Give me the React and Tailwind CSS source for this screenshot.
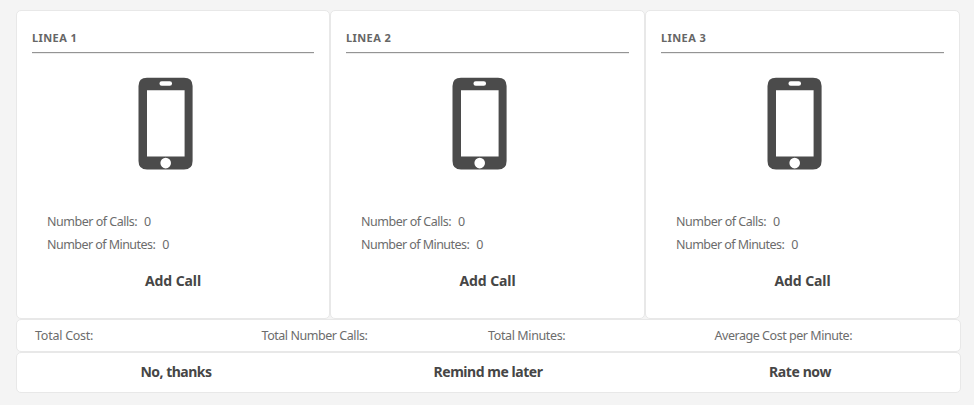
const lines = ['LINEA 1', 'LINEA 2', 'LINEA 3'];

function Phone() {
  return (
    <svg className="mt-[23px] mr-[16px] h-[93px] w-[55px] shrink-0 self-center" viewBox="0 0 55 93">
      <path
        fill="#4b4b4b"
        fillRule="evenodd"
        d="M9 .7H46Q54.6 .7 54.6 9V84Q54.6 92.5 46 92.5H9Q.5 92.5 .5 84V9Q.5 .7 9 .7ZM9 13.2V79.6H46.6V13.2ZM23.7 4.3A2.2 2.2 0 0 0 23.7 8.8H31.8A2.2 2.2 0 0 0 31.8 4.3ZM27.7 80.8A5.3 5.3 0 1 0 27.7 91.4A5.3 5.3 0 1 0 27.7 80.8Z"
      />
    </svg>
  );
}

function LineCard({ title }) {
  return (
    <section className="flex h-[309px] min-w-0 flex-col rounded-[5px] border border-[#e8e8e8] bg-white px-[15px]">
      <h2 className="mt-[19px] h-[16px] text-[11px] leading-[16px] font-bold tracking-[0.4px] text-[#666]">{title}</h2>
      <hr className="mt-[6px] h-[2px] border-t border-b border-t-[#949494] border-b-[#ececec]" />
      <Phone />
      <div className="mt-[40px] pl-[15px] text-[12.5px] leading-[23px] text-[#6c6c6c]">
        <p className="flex gap-[7px]"><span className="tracking-[-0.49px]">Number of Calls:</span><span>0</span></p>
        <p className="flex gap-[7px]"><span className="tracking-[-0.55px]">Number of Minutes:</span><span>0</span></p>
      </div>
      <button className="mt-[15px] self-center text-[14px] leading-[20px] font-bold tracking-[-0.1px] text-[#464646]">Add Call</button>
    </section>
  );
}

export default function App() {
  return (
    <main className="h-[405px] w-[974px] overflow-hidden bg-[#f4f4f4] pt-[10px] pl-[16px] font-['Noto_Sans',sans-serif]">
      <div className="grid grid-cols-[314px_315px_315px]">
        {lines.map((title) => <LineCard key={title} title={title} />)}
      </div>
      <div className="grid h-[33px] w-[945px] grid-cols-[226.5px_226.5px_226.5px_1fr] items-center rounded-[5px] border border-[#e8e8e8] bg-white pt-[2px] pl-[18px] text-[12.5px] text-[#6c6c6c]">
        <span className="tracking-[-0.25px]">Total Cost:</span>
        <span className="tracking-[-0.45px]">Total Number Calls:</span>
        <span className="tracking-[-0.38px]">Total Minutes:</span>
        <span className="tracking-[-0.46px]">Average Cost per Minute:</span>
      </div>
      <div className="grid h-[41px] w-[945px] grid-cols-[312px_312px_312px] items-center rounded-[5px] border border-[#e8e8e8] bg-white pb-[2px] pl-[3px] text-center text-[14px] font-bold text-[#464646]">
        <button className="tracking-[-0.5px]">No, thanks</button>
        <button className="tracking-[-0.46px]">Remind me later</button>
        <button className="tracking-[-0.4px]">Rate now</button>
      </div>
    </main>
  );
}
